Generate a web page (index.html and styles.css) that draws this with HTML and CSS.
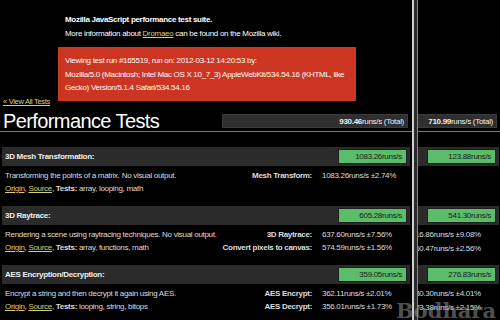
FILE: index.html
```html
<!DOCTYPE html>
<html lang="en">
<head>
    <meta charset="UTF-8">
    <title>Dromaeo: Performance Tests</title>
    <link rel="stylesheet" href="styles.css">
</head>
<body>
<div class="page">
    <div class="main">
        <div class="top">
            <a class="back" href="#">&laquo; View All Tests</a>
            <div class="intro">
                <p class="lead">Mozilla JavaScript performance test suite.</p>
                <p>More information about <a href="#">Dromaeo</a> can be found on the Mozilla wiki.</p>
                <div class="run-info">
                    Viewing test run #165519, run on: 2012-03-12 14:20:53 by:<br>
                    Mozilla/5.0 (Macintosh; Intel Mac OS X 10_7_3) AppleWebKit/534.54.16 (KHTML, like<br>
                    Gecko) Version/5.1.4 Safari/534.54.16
                </div>
            </div>
        </div>

        <div class="title-row">
            <h1>Performance Tests</h1>
            <div class="total"><b>930.46</b>runs/s (Total)</div>
        </div>

        <div class="results">
            <div class="section">
                <div class="bar"><h2>3D Mesh Transformation:</h2><div class="score">1083.26runs/s</div></div>
                <div class="body">
                    <div class="info">
                        <div>Transforming the points of a matrix. No visual output.</div>
                        <div><a href="#">Origin</a>, <a href="#">Source</a>, <b>Tests:</b> array, looping, math</div>
                    </div>
                    <div class="runs">
                        <b>Mesh Transform:</b><span>1083.26runs/s &plusmn;2.74%</span>
                    </div>
                </div>
            </div>
            <div class="section">
                <div class="bar"><h2>3D Raytrace:</h2><div class="score">605.28runs/s</div></div>
                <div class="body">
                    <div class="info">
                        <div>Rendering a scene using raytracing techniques. No visual output.</div>
                        <div><a href="#">Origin</a>, <a href="#">Source</a>, <b>Tests:</b> array, functions, math</div>
                    </div>
                    <div class="runs">
                        <b>3D Raytrace:</b><span>637.60runs/s &plusmn;7.56%</span>
                        <b>Convert pixels to canvas:</b><span>574.59runs/s &plusmn;1.56%</span>
                    </div>
                </div>
            </div>
            <div class="section">
                <div class="bar"><h2>AES Encryption/Decryption:</h2><div class="score">359.05runs/s</div></div>
                <div class="body">
                    <div class="info">
                        <div>Encrypt a string and then decrypt it again using AES.</div>
                        <div><a href="#">Origin</a>, <a href="#">Source</a>, <b>Tests:</b> looping, string, bitops</div>
                    </div>
                    <div class="runs">
                        <b>AES Encrypt:</b><span>362.11runs/s &plusmn;2.01%</span>
                        <b>AES Decrypt:</b><span>356.01runs/s &plusmn;1.73%</span>
                    </div>
                </div>
            </div>
        </div>
    </div>

    <div class="divider"></div>

    <!-- second run, only its right edge shows -->
    <div class="side">
        <div class="side-inner">
            <div class="title-row">
                <div class="total"><b>710.99</b>runs/s (Total)</div>
            </div>
            <div class="results">
                <div class="section">
                    <div class="bar"><div class="score">123.88runs/s</div></div>
                    <div class="body"></div>
                </div>
                <div class="section">
                    <div class="bar"><div class="score">541.30runs/s</div></div>
                    <div class="body">
                        <div class="runs">
                            <span>516.86runs/s &plusmn;9.08%</span>
                            <span>560.47runs/s &plusmn;2.56%</span>
                        </div>
                    </div>
                </div>
                <div class="section">
                    <div class="bar"><div class="score">276.83runs/s</div></div>
                    <div class="body">
                        <div class="runs">
                            <span>280.30runs/s &plusmn;4.01%</span>
                            <span>273.38runs/s &plusmn;2.15%</span>
                        </div>
                    </div>
                </div>
            </div>
        </div>
    </div>

    <span class="watermark">Bodhara</span>
</div>
</body>
</html>
```

FILE: styles.css
```css
body {
    margin: 0;
    background: #000;
    color: #ddd;
    font-family: "Liberation Sans", Arial, sans-serif;
    font-size: 8px;
    letter-spacing: -0.3px;
}
a {
    color: #d8cf7c;
}
.page {
    position: relative;
    display: flex;
    height: 320px;
    overflow: hidden;
}
.main {
    width: 412px;
    flex: none;
}
.divider {
    width: 3px;
    flex: none;
    background: #2a2a2a;
    border-left: 2px solid #cfcfcf;
    border-right: 1px solid #888;
}
.side {
    flex: 1;
    overflow: hidden;
    padding-top: 101px;
}
.side-inner {
    width: 412px;
    margin-left: -329px;
}

/* top */
.top {
    display: flex;
    align-items: flex-end;
}
.back {
    width: 55px;
    padding-left: 3px;
    line-height: 10px;
    margin-bottom: -6px;
    font-size: 7.5px;
}
.intro {
    padding-top: 13px;
}
.intro p {
    margin: 0 0 0 7px;
    line-height: 14px;
    color: #fff;
}
.lead {
    font-weight: bold;
}
.run-info {
    margin-top: 6px;
    width: 298px;
    box-sizing: border-box;
    padding: 7px 7px 6px;
    line-height: 13.5px;
    background: #cb3522;
    color: #fff;
    white-space: nowrap;
}

/* heading */
.title-row {
    display: flex;
    align-items: flex-end;
    height: 30px;
    border-bottom: 1px solid #7a7a7a;
}
h1 {
    margin: 0;
    padding-left: 3px;
    font-size: 20px;
    line-height: 20px;
    font-weight: normal;
    letter-spacing: -0.6px;
    color: #fff;
}
.total {
    margin: 0 4px 3px auto;
    width: 186px;
    height: 14px;
    box-sizing: border-box;
    padding-right: 3px;
    line-height: 13px;
    text-align: right;
    background: #2f2f2f;
    border: 1px solid #3a3a3a;
    color: #eee;
}

/* results */
.results {
    margin: 15px 2px 0;
}
.bar {
    display: flex;
    align-items: center;
    justify-content: space-between;
    height: 19px;
    padding: 0 3px;
    background: #2b2b2b;
}
.bar h2 {
    margin: 0;
    font-size: 8px;
    color: #eee;
}
.score {
    margin-left: auto;
    width: 69px;
    height: 15px;
    box-sizing: border-box;
    padding-right: 4px;
    line-height: 13px;
    text-align: right;
    background: #5bbd6b;
    border: 1px solid #1e1e1e;
    color: #1a1a1a;
}
.body {
    display: flex;
    height: 40px;
    box-sizing: border-box;
    padding: 3px 0 10px 3px;
    line-height: 13.5px;
}
.runs {
    margin-left: auto;
    display: grid;
    grid-template-columns: auto 88px;
    column-gap: 10px;
    align-content: start;
    white-space: nowrap;
}
.side .runs {
    grid-template-columns: 88px;
}
.runs b {
    text-align: right;
}
.watermark {
    position: absolute;
    right: 4px;
    bottom: -3px;
    font-family: "DejaVu Serif", serif;
    font-size: 21px;
    font-weight: bold;
    letter-spacing: 0;
    color: rgba(150, 150, 150, 0.55);
}
```
